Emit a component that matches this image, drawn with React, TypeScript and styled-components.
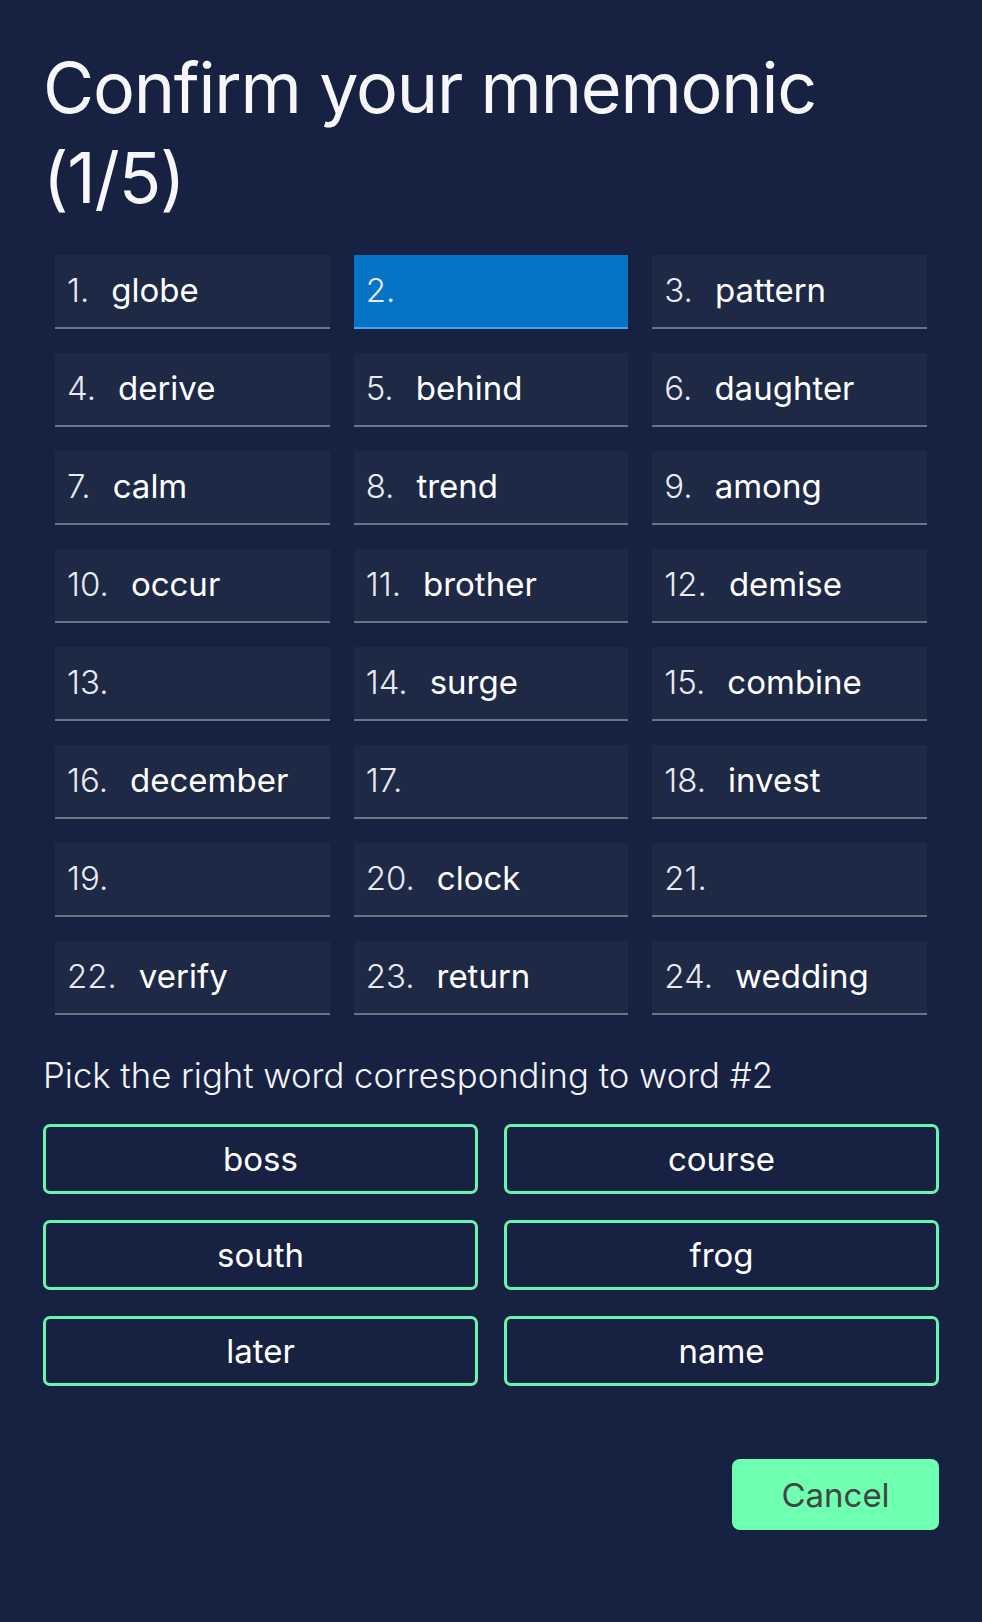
import React from 'react'
import styled, { createGlobalStyle } from 'styled-components'

const GlobalStyle = createGlobalStyle`
  html, body {
    margin: 0;
    padding: 0;
    background: #172142;
  }
  body {
    font-family: Inter, 'Noto Sans', sans-serif;
    color: #ffffff;
  }
`

const words = [
  'globe', '', 'pattern',
  'derive', 'behind', 'daughter',
  'calm', 'trend', 'among',
  'occur', 'brother', 'demise',
  '', 'surge', 'combine',
  'december', '', 'invest',
  '', 'clock', '',
  'verify', 'return', 'wedding',
]

const choices = ['boss', 'course', 'south', 'frog', 'later', 'name']

const Page = styled.div`
  display: flex;
  flex-direction: column;
  padding: 43px 43px 92px;
  min-height: 1622px;
  box-sizing: border-box;
`

const Title = styled.h1`
  margin: 0;
  font-size: 70px;
  font-weight: 400;
  line-height: 90px;
  letter-spacing: -1.2px;
  color: #f7f7f9;
`

const WordGrid = styled.div`
  display: grid;
  grid-template-columns: repeat(3, 1fr);
  column-gap: 24px;
  row-gap: 24px;
  margin: 32px 12px 0;
`

const Cell = styled.div<{ $active?: boolean }>`
  height: 74px;
  box-sizing: border-box;
  display: flex;
  align-items: center;
  padding: 0 12px 2px;
  background: ${p => (p.$active ? '#0674c6' : '#1e2946')};
  border-bottom: 2px solid ${p => (p.$active ? '#4aa3ec' : '#6b7389')};
  font-size: 33px;
`

const Num = styled.span`
  font-weight: 300;
  color: #e8eaf0;
  margin-right: 22px;
`

const Word = styled.span`
  font-weight: 400;
  color: #ffffff;
`

const Prompt = styled.p`
  margin: 40px 0 0;
  font-size: 34.7px;
  font-weight: 300;
  color: #f2f3f6;
  line-height: 40px;
`

const ChoiceGrid = styled.div`
  display: grid;
  grid-template-columns: 1fr 1fr;
  column-gap: 26px;
  row-gap: 26px;
  margin-top: 29px;
`

const Choice = styled.button`
  height: 70px;
  border: 3px solid #69f5ae;
  border-radius: 7px;
  background: transparent;
  color: #ffffff;
  font-family: Inter, 'Noto Sans', sans-serif;
  font-size: 33px;
  font-weight: 400;
  cursor: pointer;
`

const Footer = styled.div`
  display: flex;
  justify-content: flex-end;
  margin-top: 73px;
`

const CancelButton = styled.button`
  width: 207px;
  height: 71px;
  border: none;
  border-radius: 8px;
  background: #6fffb1;
  color: #444444;
  font-family: Inter, 'Noto Sans', sans-serif;
  font-size: 33px;
  font-weight: 400;
  cursor: pointer;
`

export default function App() {
  return (
    <Page>
      <GlobalStyle />
      <Title>
        Confirm your mnemonic
        <br />
        (1/5)
      </Title>
      <WordGrid>
        {words.map((w, i) => (
          <Cell key={i} $active={i === 1}>
            <Num>{i + 1}.</Num>
            {w && <Word>{w}</Word>}
          </Cell>
        ))}
      </WordGrid>
      <Prompt>Pick the right word corresponding to word #2</Prompt>
      <ChoiceGrid>
        {choices.map(c => (
          <Choice key={c}>{c}</Choice>
        ))}
      </ChoiceGrid>
      <Footer>
        <CancelButton>Cancel</CancelButton>
      </Footer>
    </Page>
  )
}
